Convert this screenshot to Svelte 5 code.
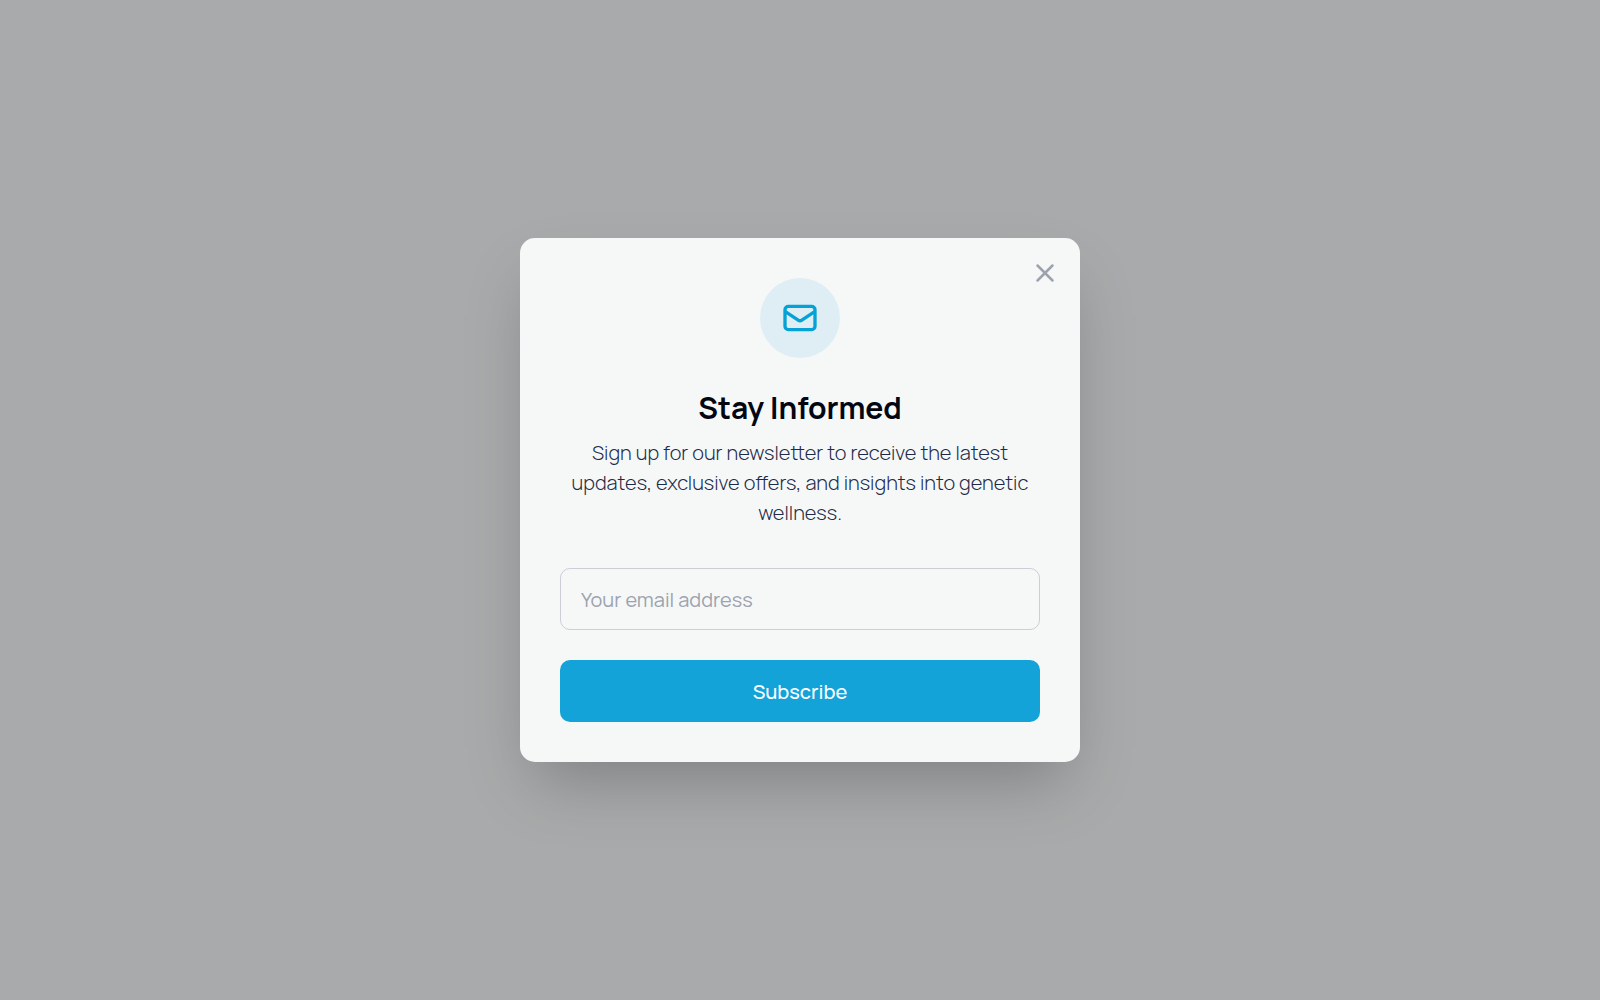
<script>
  let email = $state('');
  let open = $state(true);
</script>

<main class="overlay">
  {#if open}
    <div class="dialog" role="dialog" aria-modal="true" aria-labelledby="title">
      <button class="close" type="button" aria-label="Close" onclick={() => (open = false)}>
        <svg viewBox="0 0 24 24" width="30" height="30"><path d="M6 18L18 6M6 6l12 12" /></svg>
      </button>
      <div class="badge">
        <svg viewBox="0 0 24 24" width="40" height="40">
          <path d="M3 8l7.89 5.26a2 2 0 002.22 0L21 8M5 19h14a2 2 0 002-2V7a2 2 0 00-2-2H5a2 2 0 00-2 2v10a2 2 0 002 2z" />
        </svg>
      </div>
      <h1 id="title">Stay Informed</h1>
      <p>Sign up for our newsletter to receive the latest updates, exclusive offers, and insights into genetic wellness.</p>
      <form onsubmit={(e) => e.preventDefault()}>
        <input type="email" aria-label="Your email address" placeholder="Your email address" bind:value={email} />
        <button class="submit" type="submit">Subscribe</button>
      </form>
    </div>
  {/if}
</main>

<style>
  :global(body) { margin: 0; }
  .overlay {
    min-height: 100vh;
    box-sizing: border-box;
    padding: 20px;
    display: flex;
    align-items: center;
    justify-content: center;
    background: #a9aaab;
    font-family: Manrope, Inter, sans-serif;
  }
  .dialog {
    position: relative;
    box-sizing: border-box;
    width: 100%;
    max-width: 560px;
    padding: 40px;
    border-radius: 15px;
    background: #f6f8f8;
    box-shadow: 0 31px 62px -15px rgba(0, 0, 0, 0.25);
    text-align: center;
  }
  svg {
    display: block;
    fill: none;
    stroke: currentColor;
    stroke-width: 2;
    stroke-linecap: round;
    stroke-linejoin: round;
  }
  .close {
    position: absolute;
    top: 20px;
    right: 20px;
    padding: 0;
    border: 0;
    background: none;
    color: #9ca3af;
    cursor: pointer;
  }
  .badge {
    display: flex;
    align-items: center;
    justify-content: center;
    width: 80px;
    height: 80px;
    margin: 0 auto 30px;
    border-radius: 50%;
    background: #dfeef4;
    color: #05a2d6;
  }
  h1 {
    margin: 0 0 10px;
    font-size: 30px;
    line-height: 40px;
    font-weight: 700;
    color: #030712;
  }
  p {
    margin: 0 0 40px;
    font-size: 20px;
    line-height: 30px;
    font-weight: 300;
    color: #1e2b48;
  }
  form {
    display: flex;
    flex-direction: column;
    gap: 30px;
  }
  input, .submit {
    box-sizing: border-box;
    width: 100%;
    height: 62px;
    padding: 0 20px;
    border-radius: 10px;
    font-family: inherit;
    font-size: 20px;
  }
  input {
    border: 1px solid #cbced6;
    background: transparent;
    color: #28344e;
    font-weight: 400;
  }
  input::placeholder { color: #9ca3af; opacity: 1; }
  .submit {
    border: 0;
    background: #13a3d8;
    color: #fff;
    font-weight: 500;
    cursor: pointer;
  }
</style>
